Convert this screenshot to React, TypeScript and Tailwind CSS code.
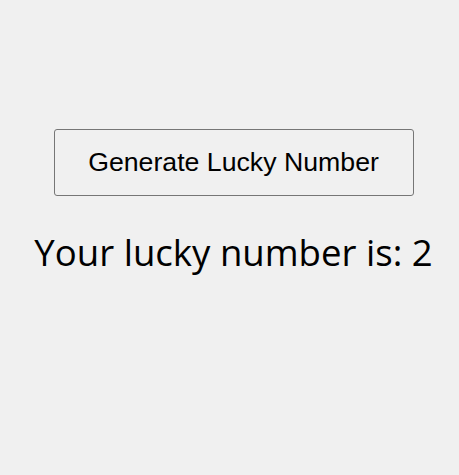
import React, { useState } from 'react';

export default function App() {
    const [lucky, setLucky] = useState(2);

    return (
        <div className="min-h-[475px] w-full bg-[#f0f0f0] flex flex-col items-center pt-[129px] pl-2">
            <button
                onClick={() => setLucky(Math.floor(Math.random() * 10) + 1)}
                className="w-[360px] h-[67px] border border-[#767676] rounded-[3px] bg-[#f0f0f0] text-[26.7px] text-black font-['Liberation_Sans',Arial,sans-serif]"
            >
                Generate Lucky Number
            </button>
            <h1 className="mt-[32px] text-[36.6px] leading-[48px] text-black font-['Open_Sans',sans-serif]">
                Your lucky number is: {lucky}
            </h1>
        </div>
    );
}
